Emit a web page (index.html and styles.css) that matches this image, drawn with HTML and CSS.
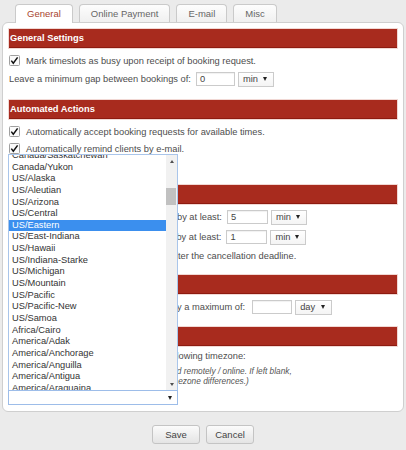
FILE: index.html
```html
<!DOCTYPE html>
<html>
<head>
<meta charset="utf-8">
<title>Settings</title>
<link rel="stylesheet" href="styles.css">
</head>
<body>
<nav class="tabs">
  <div class="tab active">General</div>
  <div class="tab">Online Payment</div>
  <div class="tab">E-mail</div>
  <div class="tab">Misc</div>
</nav>
<div class="panel">
  <section class="sec">
    <h2 class="sec-head">General Settings</h2>
    <div class="sec-body loose">
      <div class="row chk-row">
        <svg class="cb" viewBox="0 0 11 11"><rect x="0.5" y="0.5" width="10" height="10" rx="1" fill="#fbfbfb" stroke="#a0a0a0"/><path d="M2.3 5.6 L4.3 8.2 L8.6 2.4" fill="none" stroke="#111" stroke-width="1.5"/></svg>
        <span>Mark timeslots as busy upon receipt of booking request.</span>
      </div>
      <div class="row inp-row">
        <span>Leave a minimum gap between bookings of:</span>
        <span class="txt w39">0</span>
        <span class="sel w36">min</span>
      </div>
    </div>
  </section>

  <section class="sec">
    <h2 class="sec-head">Automated Actions</h2>
    <div class="sec-body loose">
      <div class="row chk-row">
        <svg class="cb" viewBox="0 0 11 11"><rect x="0.5" y="0.5" width="10" height="10" rx="1" fill="#fbfbfb" stroke="#a0a0a0"/><path d="M2.3 5.6 L4.3 8.2 L8.6 2.4" fill="none" stroke="#111" stroke-width="1.5"/></svg>
        <span>Automatically accept booking requests for available times.</span>
      </div>
      <div class="row chk-row">
        <svg class="cb" viewBox="0 0 11 11"><rect x="0.5" y="0.5" width="10" height="10" rx="1" fill="#fbfbfb" stroke="#a0a0a0"/><path d="M2.3 5.6 L4.3 8.2 L8.6 2.4" fill="none" stroke="#111" stroke-width="1.5"/></svg>
        <span>Automatically remind clients by e-mail.</span>
      </div>
      <div class="row chk-row">
        <svg class="cb" viewBox="0 0 11 11"><rect x="0.5" y="0.5" width="10" height="10" rx="1" fill="#fbfbfb" stroke="#a0a0a0"/></svg>
        <span>Notify me of new requests.</span>
      </div>
    </div>
  </section>

  <section class="sec">
    <h2 class="sec-head">Booking Restrictions</h2>
    <div class="sec-body">
      <div class="row inp-row">
        <span>Bookings must be requested in advance by at least:</span>
        <span class="txt w41">5</span>
        <span class="sel w36">min</span>
      </div>
      <div class="row inp-row">
        <span>Cancellations must be made in advance by at least:</span>
        <span class="txt w41">1</span>
        <span class="sel w36">min</span>
      </div>
      <div class="row chk-row">
        <svg class="cb" viewBox="0 0 11 11"><rect x="0.5" y="0.5" width="10" height="10" rx="1" fill="#fbfbfb" stroke="#a0a0a0"/></svg>
        <span>Allow clients to cancel the booking after the cancellation deadline.</span>
      </div>
    </div>
  </section>

  <section class="sec">
    <h2 class="sec-head">Advance Booking</h2>
    <div class="sec-body tight">
      <div class="row inp-row">
        <span>Bookings can be requested in advance by a maximum of:</span>
        <span class="txt w40 gap7"></span>
        <span class="sel w37">day</span>
      </div>
    </div>
  </section>

  <section class="sec">
    <h2 class="sec-head">Timezone</h2>
    <div class="sec-body last">
      <div class="row text-row">
        <span>Display booking times to clients in the following timezone:</span>
      </div>
      <p class="note">(Useful for appointments that will be conducted remotely / online. If left blank,<br>times are shown in your local time, without timezone differences.)</p>
      <div class="tz">
        <div class="tz-list">
          <ul class="tz-items">
            <li>Canada/Saskatchewan</li>
            <li>Canada/Yukon</li>
            <li>US/Alaska</li>
            <li>US/Aleutian</li>
            <li>US/Arizona</li>
            <li>US/Central</li>
            <li class="on">US/Eastern</li>
            <li>US/East-Indiana</li>
            <li>US/Hawaii</li>
            <li>US/Indiana-Starke</li>
            <li>US/Michigan</li>
            <li>US/Mountain</li>
            <li>US/Pacific</li>
            <li>US/Pacific-New</li>
            <li>US/Samoa</li>
            <li>Africa/Cairo</li>
            <li>America/Adak</li>
            <li>America/Anchorage</li>
            <li>America/Anguilla</li>
            <li>America/Antigua</li>
            <li>America/Araguaina</li>
          </ul>
          <div class="sbar">
            <div class="sbtn"><span class="up"></span></div>
            <div class="strack"><div class="thumb"></div></div>
            <div class="sbtn"><span class="down"></span></div>
          </div>
        </div>
        <div class="tz-select"></div>
      </div>
    </div>
  </section>
</div>
<div class="btns">
  <button class="btn">Save</button>
  <button class="btn">Cancel</button>
</div>
</body>
</html>
```
FILE: styles.css
```css
* { box-sizing: border-box; }
html, body { margin: 0; padding: 0; }
body {
  width: 406px;
  height: 450px;
  overflow: hidden;
  background: #ebebeb;
  font-family: "Liberation Sans", Arial, sans-serif;
  font-size: 9.3px;
  color: #4d4d4d;
}

.tabs {
  display: flex;
  gap: 6px;
  height: 22px;
  padding: 4px 0 0 15px;
}
.tab {
  height: 18px;
  padding: 0 11px;
  border: 1px solid #cacaca;
  border-bottom: none;
  border-radius: 4px 4px 0 0;
  background: linear-gradient(#fdfdfd, #f0f0f0);
  color: #666;
  font-size: 9.5px;
  line-height: 17px;
}
.tab.active {
  height: 19px;
  background: #fff;
  color: #a8442f;
  position: relative;
  z-index: 1;
}

.panel {
  margin: 0 2px;
  border: 1px solid #cfcfcf;
  border-radius: 6px;
  background: #fff;
  padding: 6px 6px 6px;
}

.sec-head {
  margin: 0;
  height: 19px;
  padding-left: 1px;
  background: #a82b1e;
  border-bottom: 1px solid #8d1b10;
  box-shadow: 0 0 0 1px #f1d8d4;
  color: #fff;
  font-size: 9.3px;
  font-weight: bold;
  line-height: 18px;
}

.sec-body { padding: 3px 0 11px; }
.sec-body.loose { padding-top: 4px; }
.sec-body.tight { padding-bottom: 10px; }
.sec-body.last { padding-bottom: 0; }

.row {
  display: flex;
  align-items: center;
  white-space: nowrap;
}
.chk-row { height: 17px; }
.inp-row { height: 20px; }
.text-row { height: 14px; }

.cb {
  width: 11px;
  height: 11px;
  flex: none;
  margin-right: 6px;
}

.txt {
  height: 14px;
  margin-left: 5px;
  padding-left: 3px;
  border: 1px solid #cbcbcb;
  background: #fff;
  box-shadow: inset 0 1px 1px rgba(0, 0, 0, 0.06);
  line-height: 12px;
  color: #444;
}
.txt.gap7 { margin-left: 7px; }
.sel {
  height: 15px;
  margin-left: 3px;
  padding: 0 6px 0 4px;
  border: 1px solid #cbcbcb;
  background: linear-gradient(#ffffff, #f4f4f4);
  display: flex;
  align-items: center;
  justify-content: space-between;
  color: #444;
}
.sel::after {
  content: "";
  border-left: 2.5px solid transparent;
  border-right: 2.5px solid transparent;
  border-top: 4px solid #222;
}
.w36 { width: 36px; }
.w37 { width: 37px; }
.w39 { width: 39px; }
.w40 { width: 40px; }
.w41 { width: 41px; }

.note {
  margin: 4px 0 0;
  font-size: 8.3px;
  font-style: italic;
  line-height: 9.5px;
  color: #555;
  white-space: nowrap;
}

.tz {
  position: relative;
  width: 170px;
  margin: 4px 0 0 -1px;
}
.tz-select {
  height: 15px;
  border: 1px solid #9dbde9;
  background: #fff;
  display: flex;
  justify-content: flex-end;
  align-items: center;
  padding-right: 5px;
}
.tz-select::after {
  content: "";
  border-left: 2.5px solid transparent;
  border-right: 2.5px solid transparent;
  border-top: 4px solid #222;
}
.tz-list {
  position: absolute;
  left: 0;
  bottom: 100%;
  width: 170px;
  height: 236px;
  border: 1px solid #a9c5ea;
  border-bottom: none;
  background: #fff;
  display: flex;
  overflow: hidden;
  z-index: 5;
}
.tz-items {
  list-style: none;
  margin: -5px 0 0;
  padding: 0;
  flex: 1;
  min-width: 0;
}
.tz-items li {
  height: 11.65px;
  line-height: 11.65px;
  padding-left: 3px;
  color: #333;
  white-space: nowrap;
  overflow: hidden;
}
.tz-items li.on {
  background: #3b8fee;
  color: #fff;
}
.sbar {
  width: 11px;
  flex: none;
  background: #f1f1f1;
  display: flex;
  flex-direction: column;
}
.sbtn {
  height: 12px;
  display: flex;
  align-items: center;
  justify-content: center;
}
.up, .down {
  border-left: 2.5px solid transparent;
  border-right: 2.5px solid transparent;
}
.up { border-bottom: 3px solid #505050; }
.down { border-top: 3px solid #505050; }
.strack { flex: 1; }
.thumb {
  margin: 21px 1px 0 0;
  height: 17px;
  background: #c1c1c1;
}

.btns {
  display: flex;
  justify-content: center;
  gap: 6px;
  margin-top: 13px;
}
.btn {
  width: 48px;
  height: 19px;
  padding: 0;
  border: 1px solid #c4c4c4;
  border-radius: 3px;
  background: linear-gradient(#fbfbfb, #e4e4e4);
  font-family: "Liberation Sans", Arial, sans-serif;
  font-size: 9.5px;
  color: #444;
}
```
